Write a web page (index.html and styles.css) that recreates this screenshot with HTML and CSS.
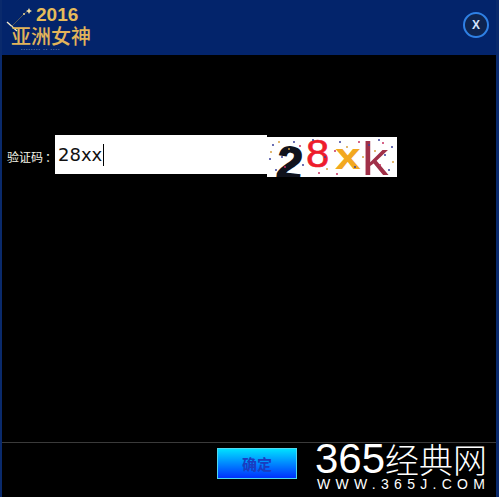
FILE: index.html
```html
<!DOCTYPE html>
<html lang="zh">
<head>
<meta charset="utf-8">
<title>验证码</title>
<link rel="stylesheet" href="styles.css">
</head>
<body>
<div class="window">
  <header class="header">
    <div class="logo">
      <svg class="sparkle" width="40" height="40" viewBox="0 0 40 40"><path d="M7 22 L17 31" stroke="#f8eccc" stroke-width="1.3"/><path d="M11 27 L24 14 L29 10" stroke="#8a7a50" stroke-width=".6" fill="none"/><path d="M29 8 L30 10 L32 11 L30 12 L29 14 L28 12 L26 11 L28 10 Z" fill="#f4e2a8"/><circle cx="24" cy="14" r="1" fill="#f0d890"/></svg>
      <div class="logo-year">2016</div>
      <div class="logo-name">亚洲女神</div>
      <div class="logo-dots">• • • • • • • • &nbsp; • • &nbsp; • • • •</div>
    </div>
    <button class="close" type="button">X</button>
  </header>
  <main class="main">
    <div class="captcha-row">
      <label class="label">验证码<span class="colon">：</span></label>
      <div class="input">28xx<span class="caret"></span></div>
      <div class="captcha">
        <span class="ch ch1">2</span><span class="ch ch2">8</span><span class="ch ch3">x</span><span class="ch ch4">k</span>
        <svg class="noise" width="130" height="40" viewBox="0 0 130 40">
          <g fill="#3a3f9a"><circle cx="6" cy="8" r="1"/><circle cx="15" cy="20" r="1"/><circle cx="9" cy="33" r="1"/><circle cx="27" cy="5" r="1"/><circle cx="36" cy="28" r="1"/><circle cx="46" cy="3" r="1"/><circle cx="58" cy="20" r="1"/><circle cx="73" cy="5" r="1"/><circle cx="88" cy="30" r="1"/><circle cx="102" cy="8" r="1"/><circle cx="125" cy="10" r="1"/><circle cx="118" cy="18" r="1"/><circle cx="122" cy="33" r="1"/><circle cx="112" cy="3" r="1"/><circle cx="3" cy="22" r="1"/></g>
          <g fill="#d8a040"><circle cx="12" cy="5" r="1"/><circle cx="22" cy="12" r="1"/><circle cx="4" cy="15" r="1"/><circle cx="60" cy="32" r="1"/><circle cx="80" cy="10" r="1"/><circle cx="96" cy="20" r="1"/><circle cx="126" cy="25" r="1"/><circle cx="108" cy="14" r="1"/></g>
          <g fill="#c83060"><circle cx="18" cy="30" r="1"/><circle cx="33" cy="9" r="1"/><circle cx="52" cy="36" r="1"/><circle cx="68" cy="14" r="1"/><circle cx="92" cy="5" r="1"/><circle cx="116" cy="6" r="1"/><circle cx="113" cy="28" r="1"/><circle cx="70" cy="37" r="1"/></g>
        </svg>
      </div>
    </div>
  </main>
  <footer class="footer">
    <button class="ok" type="button">确定</button>
  </footer>
  <div class="watermark">
    <div class="wm-title"><span class="wm-num">365</span>经典网</div>
    <div class="wm-url">WWW.365J.COM</div>
  </div>
</div>
</body>
</html>
```
FILE: styles.css
```css
html, body { margin: 0; padding: 0; background: #000; }
.window {
  position: relative;
  width: 499px;
  height: 497px;
  box-sizing: border-box;
  display: flex;
  flex-direction: column;
  background: #000;
  border-left: 2px solid #0a2a6c;
  border-right: 3px solid #0a2a6c;
  overflow: hidden;
  font-family: "Noto Sans CJK SC", "Liberation Sans", sans-serif;
}
.header {
  height: 55px;
  flex: none;
  margin: 0 -3px 0 -2px;
  background: #03246b;
  display: flex;
  align-items: flex-start;
  justify-content: space-between;
  padding: 0 10px 0 10px;
}
.logo { position: relative; width: 84px; height: 54px; }
.sparkle { position: absolute; left: -10px; top: 0; }
.logo-year {
  position: absolute; left: 26px; top: 6px;
  font: 19px/18px "Liberation Sans", sans-serif;
  font-weight: bold;
  color: #e6bb5a;
}
.logo-name {
  position: absolute; left: 1px; top: 24px;
  font: 500 20px/24px "Noto Sans CJK SC", sans-serif;
  color: #e2b45a;
  white-space: nowrap;
}
.logo-dots {
  position: absolute; left: 11px; top: 47px;
  font: 4px/5px "Liberation Sans", sans-serif;
  color: #6d7fa8;
  white-space: nowrap;
}
.close {
  width: 26px; height: 26px;
  margin-top: 12px;
  padding: 0;
  border: 2px solid #2f80e4;
  border-radius: 50%;
  background: #0e2450;
  color: #d4e4ff;
  font: bold 12px/22px "Liberation Sans", sans-serif;
}
.main { flex: 1; padding-top: 80px; }
.captcha-row { display: flex; align-items: flex-start; }
.label {
  width: 53px;
  margin-top: 14px;
  padding-left: 5px;
  box-sizing: border-box;
  font-family: "Noto Sans CJK TC", sans-serif;
  font-size: 12px;
  line-height: 16px;
  color: #f4f4e8;
  white-space: nowrap;
}
.colon { margin-left: 2px; }
.input {
  width: 212px;
  height: 39px;
  background: #fff;
  color: #111;
  font: 18px/38px "DejaVu Sans", sans-serif;
  padding-left: 3px;
  box-sizing: border-box;
  display: flex;
  align-items: center;
}
.caret { width: 1px; height: 22px; background: #000; margin-left: 1px; }
.captcha {
  position: relative;
  width: 130px;
  height: 40px;
  margin-top: 2px;
  background: #fff;
  overflow: hidden;
}
.noise { position: absolute; left: 0; top: 0; }
.ch { position: absolute; line-height: 40px; font-family: "Liberation Sans", sans-serif; }
.ch1 { left: 10px; top: 6px; font-size: 46px; font-weight: bold; color: #10121c; -webkit-text-stroke: 1.5px #10121c; transform: rotate(6deg); }
.ch2 { left: 40px; top: -3px; font-size: 38px; color: #ee1c2c; -webkit-text-stroke: .6px #ee1c2c; transform: scaleX(1.1); }
.ch3 { left: 68px; top: 0; font-size: 37px; font-weight: bold; color: #f2a820; transform: scaleX(1.25); transform-origin: left; }
.ch4 { left: 95px; top: 2px; font-size: 46px; color: #a03048; transform: scaleX(1.15); transform-origin: left; }
.footer {
  height: 55px;
  flex: none;
  border-top: 1px solid #3a3a3a;
  box-sizing: border-box;
  padding: 5px 0 0 215px;
}
.ok {
  width: 80px;
  height: 31px;
  padding: 0;
  border: 1px solid #4fd8f0;
  background: linear-gradient(#00e0ff, #0030ff);
  color: #1a3cc0;
  font: bold 15px/26px "Noto Sans CJK SC", sans-serif;
}
.watermark {
  position: absolute;
  left: 313px;
  top: 440px;
  color: #fff;
}
.wm-title {
  font: 300 34px/38px "Noto Sans CJK SC", sans-serif;
  white-space: nowrap;
}
.wm-num {
  font: 42px/38px "Liberation Sans", sans-serif;
}
.wm-url {
  padding-left: 2px;
  font: 14px/12px "Liberation Sans", sans-serif;
  letter-spacing: 5.3px;
  white-space: nowrap;
}
```
